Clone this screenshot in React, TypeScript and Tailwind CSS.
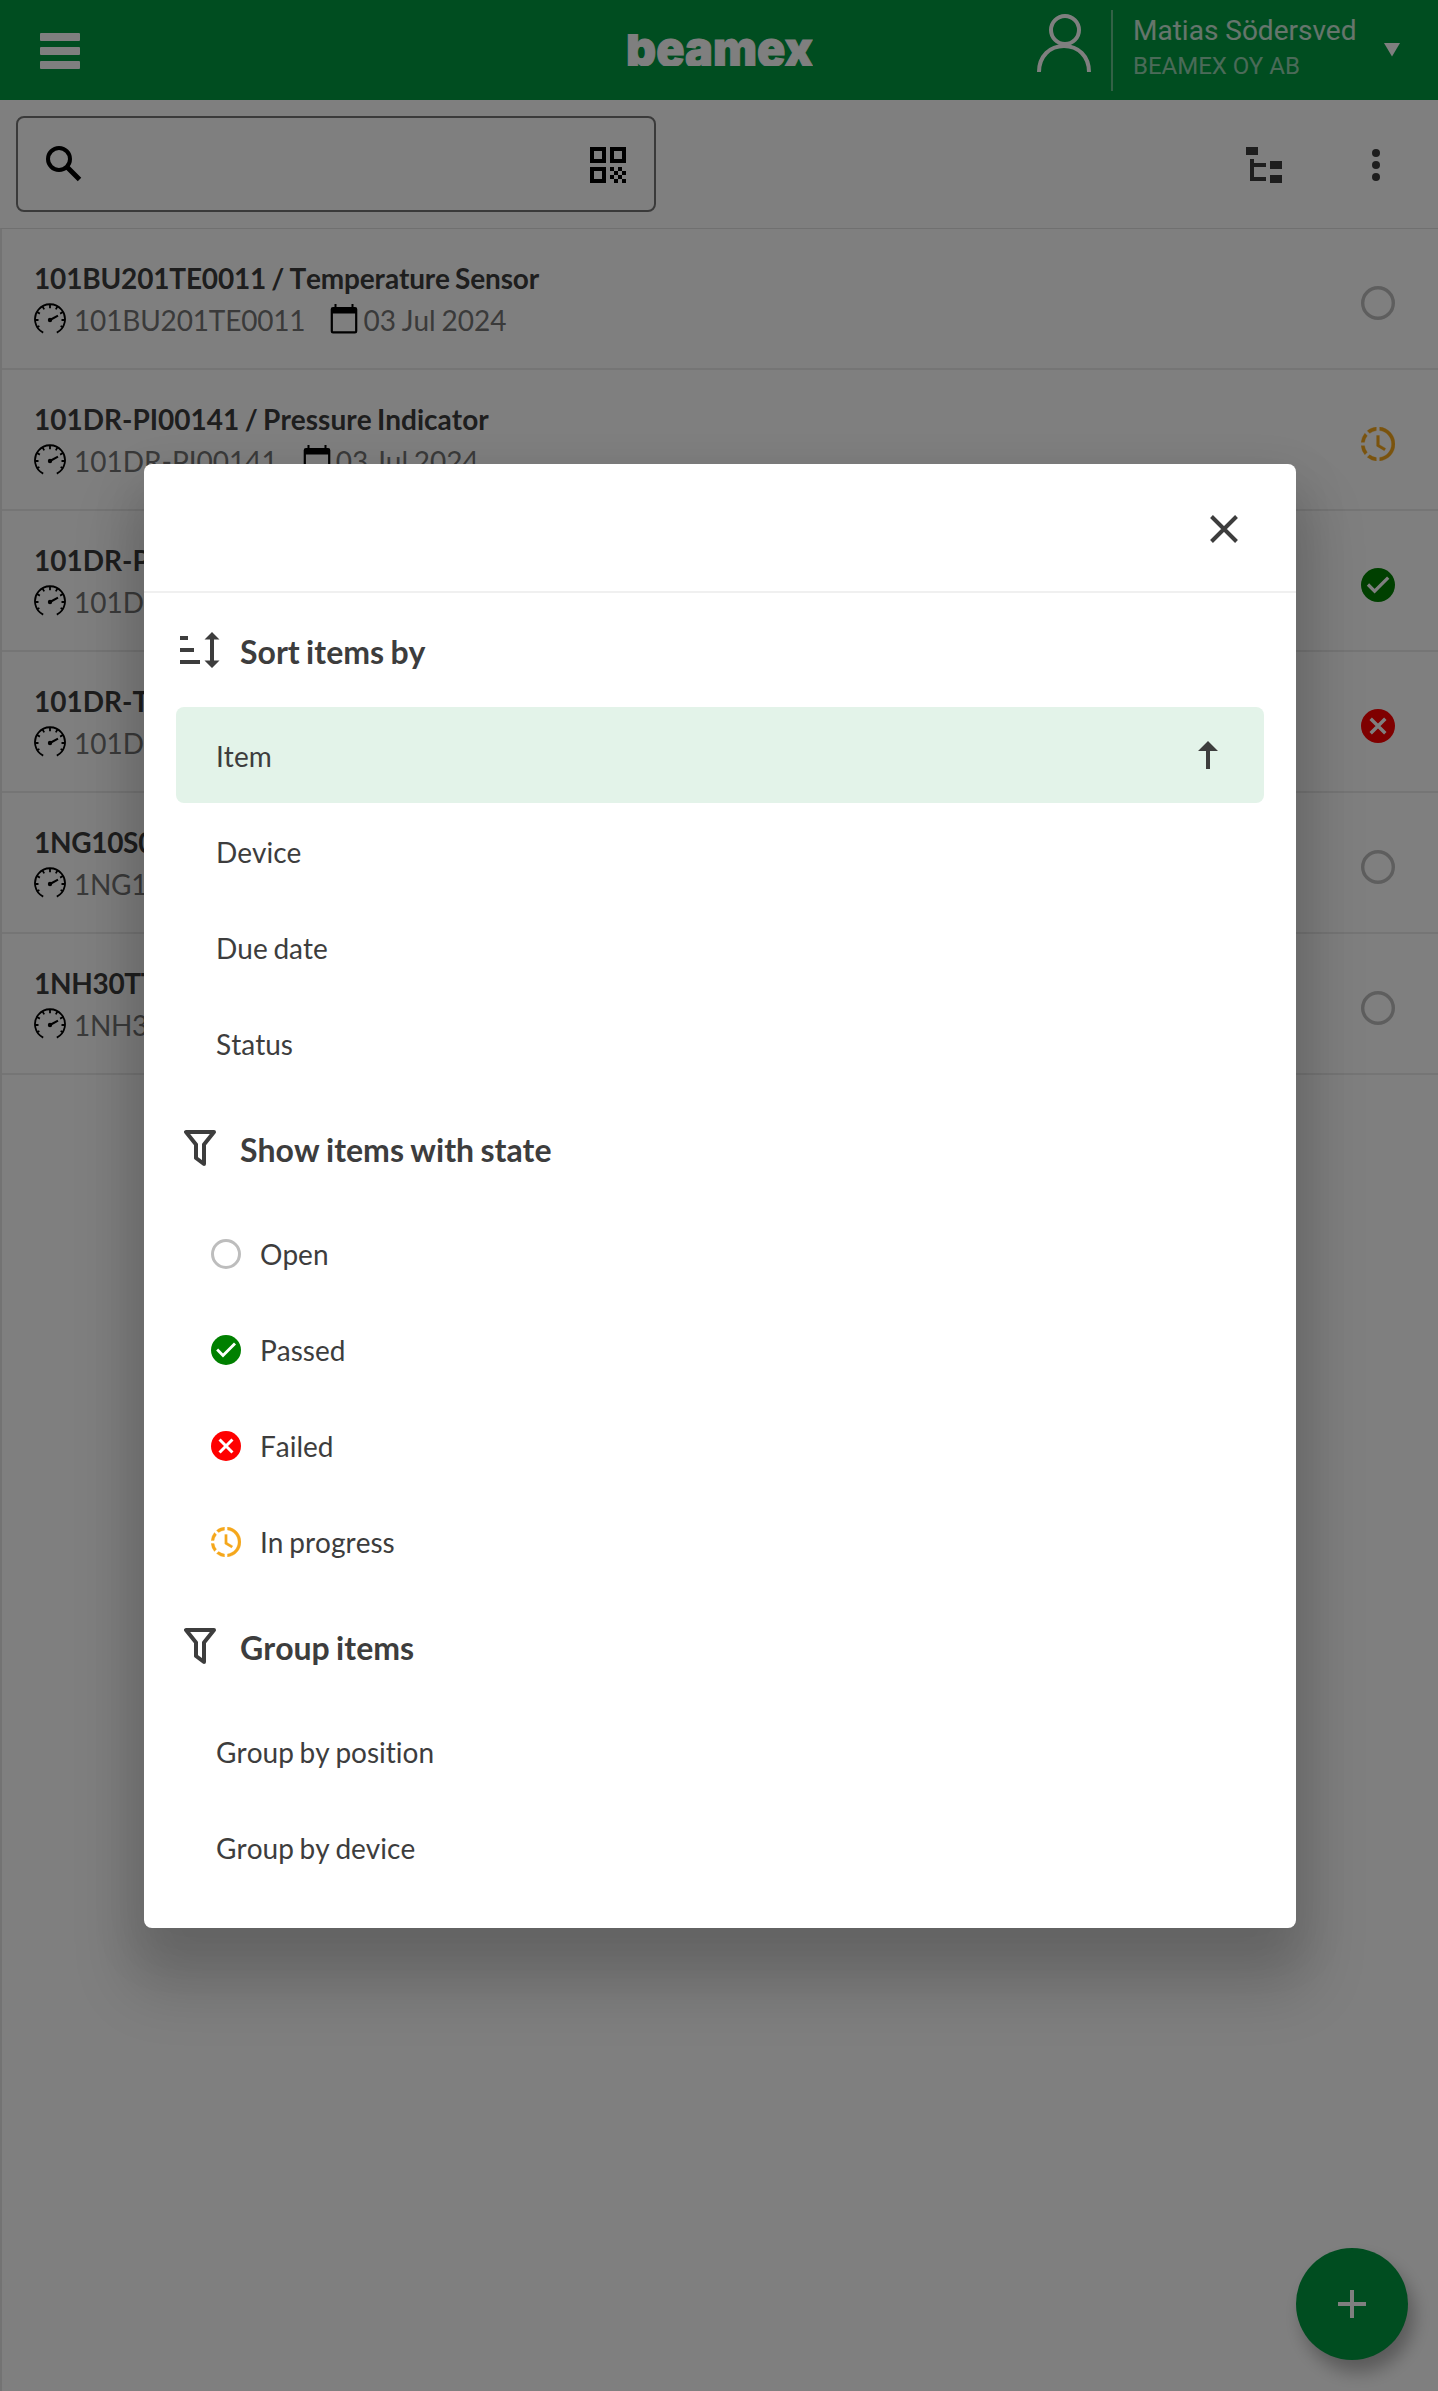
import type { ReactNode } from 'react';

type Status = 'open' | 'progress' | 'passed' | 'failed';

const items: { name: string; device: string; date: string; status: Status; tracking: string }[] = [
  { name: '101BU201TE0011 / Temperature Sensor', device: '101BU201TE0011', date: '03 Jul 2024', status: 'open', tracking: 'tracking-[-0.17px]' },
  { name: '101DR-PI00141 / Pressure Indicator', device: '101DR-PI00141', date: '03 Jul 2024', status: 'progress', tracking: 'tracking-normal' },
  { name: '101DR-PI00142', device: '101DR-PI00142', date: '03 Jul 2024', status: 'passed', tracking: 'tracking-normal' },
  { name: '101DR-TI00143', device: '101DR-TI00143', date: '03 Jul 2024', status: 'failed', tracking: 'tracking-normal' },
  { name: '1NG10S001', device: '1NG10S001', date: '03 Jul 2024', status: 'open', tracking: 'tracking-[-0.3px]' },
  { name: '1NH30TT01', device: '1NH30TT01', date: '03 Jul 2024', status: 'open', tracking: 'tracking-[-0.3px]' },
];

const sortOptions = ['Item', 'Device', 'Due date', 'Status'];

const stateOptions: { label: string; status: Status }[] = [
  { label: 'Open', status: 'open' },
  { label: 'Passed', status: 'passed' },
  { label: 'Failed', status: 'failed' },
  { label: 'In progress', status: 'progress' },
];

const groupOptions = ['Group by position', 'Group by device'];

function StatusIcon({ status, className }: { status: Status; className: string }) {
  return (
    <svg viewBox="0 0 20 20" className={className} fill="none">
      {status === 'open' && <circle cx="10" cy="10" r="9" stroke="#bdbdbd" strokeWidth="2" />}
      {status === 'passed' && (
        <>
          <circle cx="10" cy="10" r="10" fill="#008000" />
          <path d="M4.1 9.7 8 13.6l8-8" stroke="#fff" strokeWidth="1.9" />
        </>
      )}
      {status === 'failed' && (
        <>
          <circle cx="10" cy="10" r="10" fill="#ff0000" />
          <path d="M5.7 5.7l8.6 8.6M14.3 5.7l-8.6 8.6" stroke="#fff" strokeWidth="2" />
        </>
      )}
      {status === 'progress' && (
        <path
          fill="#f5a71b"
          stroke="#f5a71b"
          strokeWidth=".2"
          d="M11 .05v2.02c3.95.49 7 3.85 7 7.93s-3.05 7.44-7 7.93v2c5.05-.5 9-4.76 9-9.93S16.05.57 11 .05zM9 .05C7.05.25 5.2 1 3.67 2.26L5.1 3.74A8 8 0 0 1 9 2.11V.05zM2.26 3.67A9.9 9.9 0 0 0 .05 9h2a8 8 0 0 1 1.64-3.9L2.26 3.67zM.06 11a10 10 0 0 0 2.21 5.33l1.42-1.43A8 8 0 0 1 2.06 11h-2zM5.1 16.37l-1.43 1.37A10 10 0 0 0 9 20v-2a8 8 0 0 1-3.9-1.63zM9.2 5v6.25l4.5 2.67.85-1.33-3.75-2.22V5H9.2z"
        />
      )}
    </svg>
  );
}

function GaugeIcon() {
  return (
    <svg viewBox="0 0 32 32" className="h-8 w-8" fill="none" stroke="#000" strokeWidth="1.8">
      <path d="M9.2 29.6A15 15 0 1 1 22.8 29.6" />
      <path d="M16 1.5v3.7M8.5 3.4l1.7 3M23.5 3.4l-1.7 3M3 9l2.9 1.6M29 9l-2.9 1.6M1 17h3.5M31 17h-3.5M2.7 24.4l2.7-1.4M29.3 24.4l-2.7-1.4" />
      <circle cx="16" cy="17" r="2.2" fill="#000" stroke="none" />
      <path d="M16 17l8-4.4" strokeWidth="2" />
    </svg>
  );
}

function CalendarIcon() {
  return (
    <svg viewBox="0 0 28 30" className="h-[30px] w-7">
      <path
        fill="#000"
        fillRule="evenodd"
        d="M4.5 0h2v3h15V0h2v3H25a2.3 2.3 0 0 1 2.3 2.3v22A2.3 2.3 0 0 1 25 29.6H3A2.3 2.3 0 0 1 .7 27.3V5.3A2.3 2.3 0 0 1 3 3h1.5zM2.9 9.5v17.7h22.2V9.5z"
      />
    </svg>
  );
}

function FilterIcon() {
  return (
    <svg viewBox="0 0 32 36" className="h-9 w-8" fill="none" stroke="#3d3d3d" strokeWidth="4" strokeLinejoin="round">
      <path d="M2 2h28L20 14.5V34l-8-6V14.5z" />
    </svg>
  );
}

function SortIcon() {
  return (
    <svg viewBox="0 0 40 36" className="h-9 w-10" fill="#3d3d3d">
      <path d="M0 4h8v4H0zM0 16h14v4H0zM0 28h20v4H0z" />
      <path d="M32 0l7.5 7.5H34v21h5.5L32 36l-7.5-7.5H30v-21h-5.5z" />
    </svg>
  );
}

function SectionTitle({ icon, children }: { icon: ReactNode; children: ReactNode }) {
  return (
    <div className="flex h-[114px] pt-[39px]">
      <div className="flex w-16 pl-1">{icon}</div>
      <h2 className="text-[32px] leading-[40px] font-bold">{children}</h2>
    </div>
  );
}

export default function App() {
  return (
    <div className="relative h-[2391px] w-[1438px] overflow-hidden bg-white font-['Lato',sans-serif] text-[#3d3d3d] [font-kerning:none] [font-variant-ligatures:none] [word-spacing:-0.09em]">
      {/* Top bar */}
      <header className="flex h-[100px] items-start bg-[#009a41] font-['Roboto',sans-serif] text-white [font-kerning:auto] [word-spacing:0]">
        <div className="flex w-[627px] flex-col gap-1.5 pt-[33px] pl-10">
          <span className="h-2 w-10 rounded-[1px] bg-white" />
          <span className="h-2 w-10 rounded-[1px] bg-white" />
          <span className="h-2 w-10 rounded-[1px] bg-white" />
        </div>
        <svg viewBox="0 0 186 32" className="mt-[34px] h-8 w-[186px] overflow-visible">
          <clipPath id="wordmark">
            <rect width="186" height="32" />
          </clipPath>
          <text
            x="-1"
            y="31.5"
            textLength="187"
            lengthAdjust="spacingAndGlyphs"
            fill="#fff"
            stroke="#fff"
            strokeWidth="1"
            clipPath="url(#wordmark)"
            className="font-['Inter',sans-serif] text-[48px] font-black"
          >
            beamex
          </text>
        </svg>
        <svg viewBox="0 0 54 58" className="mt-3.5 ml-[224px] h-[58px] w-[54px]" fill="none" stroke="#fff" strokeWidth="4">
          <circle cx="28" cy="16" r="14" />
          <path d="M2 58C2 42 13 32 27 32s25 10 25 26" />
        </svg>
        <div className="mt-2.5 ml-5 h-[81px] w-0.5 bg-white/40" />
        <div className="ml-5 w-[251px] pt-[13px]">
          <p className="text-[28px] leading-[36px] text-white/80">Matias Södersved</p>
          <p className="text-[24px] leading-[34px] text-white/60">BEAMEX OY AB</p>
        </div>
        <svg viewBox="0 0 16 14" className="mt-[43px] h-3.5 w-4" fill="#fff">
          <path d="M0 0h16L8 13.5z" />
        </svg>
      </header>

      {/* Search and tools */}
      <div className="flex h-32 items-center px-4">
        <div className="flex h-24 w-[640px] items-center justify-between rounded-lg border-2 border-[#757575] pr-7 pl-7">
          <svg viewBox="0 0 36 36" className="h-9 w-9" fill="none" stroke="#000">
            <circle cx="13" cy="13" r="11" strokeWidth="4" />
            <path d="M21 21l12.5 12.5" strokeWidth="5" />
          </svg>
          <svg viewBox="0 0 18 18" className="mt-0.5 h-9 w-9" fill="#000">
            <path
              fillRule="evenodd"
              d="M0 0h8v8H0zM2 2v4h4V2zM10 0h8v8h-8zM12 2v4h4V2zM0 10h8v8H0zM2 12v4h4v-4z"
            />
            <path d="M10 10h2v2h-2zM14 10h2v2h-2zM12 12h2v2h-2zM16 12h2v2h-2zM10 14h2v2h-2zM14 14h2v2h-2zM12 16h2v2h-2zM16 16h2v2h-2z" />
          </svg>
        </div>
        <svg viewBox="0 0 36 36" className="mt-0.5 ml-[590px] h-9 w-9" fill="#3d3d3d">
          <path d="M0 0h12v8H0zM4 12h4v4h12v4H8v10h12v4H4zM24 14h12v8H24zM24 28h12v8H24z" />
        </svg>
        <svg viewBox="0 0 8 32" className="mt-0.5 ml-[90px] h-8 w-2" fill="#3d3d3d">
          <circle cx="4" cy="4" r="4" />
          <circle cx="4" cy="16" r="4" />
          <circle cx="4" cy="28" r="4" />
        </svg>
      </div>

      {/* Item list */}
      <ul className="h-[2163px] border-t border-l-2 border-t-[#e0e0e0] border-l-[#e6e6e6]">
        {items.map((item) => (
          <li key={item.name} className="flex h-[141px] justify-between border-b-2 border-[#ebebeb] pt-7 pr-[43px] pl-8">
            <div>
              <h3 className={`text-[28px] leading-[42px] font-bold ${item.tracking}`}>{item.name}</h3>
              <div className="flex text-[28px] leading-[42px] text-[#757575]">
                <div className="mr-2 pt-1">
                  <GaugeIcon />
                </div>
                <span className={item.tracking}>{item.device}</span>
                <div className="mr-[5px] ml-[25px] pt-[5px]">
                  <CalendarIcon />
                </div>
                <span>{item.date}</span>
              </div>
            </div>
            <StatusIcon status={item.status} className="mt-[29px] h-[34px] w-[34px]" />
          </li>
        ))}
      </ul>

      {/* Add button */}
      <button className="absolute top-[2248px] left-[1296px] flex h-28 w-28 items-center justify-center rounded-full bg-[#009a41] shadow-[6px_12px_18px_rgba(0,0,0,0.3)]">
        <svg viewBox="0 0 28 28" className="h-7 w-7" stroke="#fff" strokeWidth="4">
          <path d="M14 0v28M0 14h28" />
        </svg>
      </button>

      {/* Sort and filter dialog */}
      <div className="absolute inset-0 bg-black/50 pt-[464px] pl-36">
        <div className="h-[1464px] w-[1152px] rounded-lg bg-white shadow-[0_48px_60px_14px_rgba(0,0,0,0.16),0_18px_50px_8px_rgba(0,0,0,0.08)]">
          <div className="flex h-[129px] justify-end border-b-2 border-[#f0f0f0] pt-[51px] pr-[58px]">
            <svg viewBox="0 0 28 28" className="h-7 w-7" stroke="#3d3d3d" strokeWidth="4">
              <path d="M1.5 1.5l25 25M26.5 1.5l-25 25" />
            </svg>
          </div>
          <div className="px-8 text-[28px]">
            <SectionTitle icon={<SortIcon />}>Sort items by</SectionTitle>
            {sortOptions.map((label) => (
              <div
                key={label}
                className={
                  label === 'Item'
                    ? 'flex h-24 items-center justify-between rounded-lg bg-[#e3f3e9] pr-[46px] pl-10'
                    : 'flex h-24 items-center pl-10'
                }
              >
                <span className="pt-0.5">{label}</span>
                {label === 'Item' && (
                  <svg viewBox="0 0 20 28" className="h-7 w-5" fill="#3d3d3d">
                    <path d="M10 0l10 10h-8v18H8V10H0z" />
                  </svg>
                )}
              </div>
            ))}

            <SectionTitle icon={<div className="pl-1"><FilterIcon /></div>}>Show items with state</SectionTitle>
            {stateOptions.map((option) => (
              <div key={option.label} className="flex h-24 items-center pl-[35px]">
                <StatusIcon status={option.status} className="mt-px mr-[19px] h-[30px] w-[30px]" />
                <span className="pt-0.5">{option.label}</span>
              </div>
            ))}

            <SectionTitle icon={<div className="pl-1"><FilterIcon /></div>}>Group items</SectionTitle>
            {groupOptions.map((label) => (
              <div key={label} className="flex h-24 items-center pl-10">
                <span className="pt-0.5">{label}</span>
              </div>
            ))}
          </div>
        </div>
      </div>
    </div>
  );
}
